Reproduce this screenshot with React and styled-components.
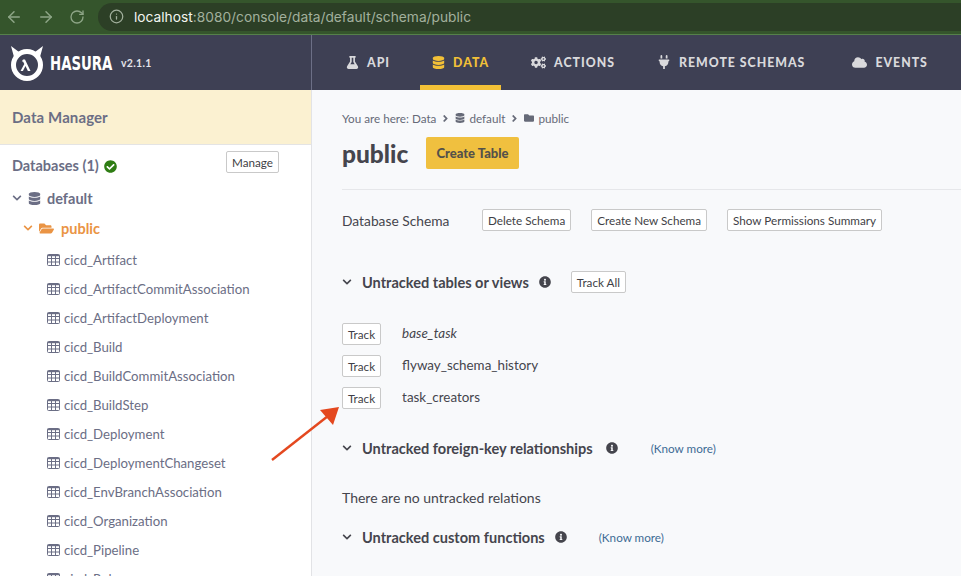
import React from "react";
import styled, { createGlobalStyle } from "styled-components";
import {
  FaFlask,
  FaDatabase,
  FaCogs,
  FaPlug,
  FaCloud,
  FaCheckCircle,
  FaChevronDown,
  FaFolderOpen,
  FaFolder,
  FaInfoCircle,
  FaAngleRight,
} from "react-icons/fa";
import { ArrowLeft, ArrowRight, RotateCw, Info } from "lucide-react";

const GlobalStyle = createGlobalStyle`
  html, body {
    margin: 0;
    padding: 0;
    height: 100%;
    overflow: hidden;
    background: #ffffff;
    font-family: Lato, "Noto Sans", sans-serif;
  }
  * { box-sizing: border-box; }
`;

const Page = styled.div`
  position: relative;
  width: 961px;
  height: 576px;
  display: flex;
  flex-direction: column;
  overflow: hidden;
`;

const ChromeBar = styled.div`
  height: 35px;
  flex: none;
  display: flex;
  align-items: center;
  padding: 0 0 1px 5px;
  background: #35552c;
  border-bottom: 1px solid #55804a;
  color: #8da586;
`;

const NavButton = styled.span`
  display: flex;
  width: 18px;
  margin-right: 14px;
`;

const UrlPill = styled.div`
  flex: 1;
  height: 28px;
  margin-left: -3px;
  display: flex;
  align-items: center;
  gap: 10px;
  padding-left: 11px;
  background: #2c3f26;
  border-radius: 14px 0 0 14px;
  font-family: Inter, sans-serif;
  font-size: 13.75px;
  color: #a2b09d;
`;

const Host = styled.span`
  color: #f2f5f0;
`;

const TopBar = styled.header`
  height: 55px;
  flex: none;
  display: flex;
  background: #3e4054;
`;

const Brand = styled.div`
  width: 312px;
  flex: none;
  display: flex;
  align-items: center;
  padding-left: 10px;
  border-right: 1px solid #6c6f86;
`;

const BrandName = styled.span`
  margin-left: 6px;
  width: 60px;
  font-family: "DejaVu Sans Condensed", "Liberation Sans", sans-serif;
  font-weight: 700;
  font-size: 20px;
  color: #ffffff;
  transform: scaleX(0.74);
  transform-origin: left center;
`;

const Version = styled.span`
  margin-left: 11px;
  font-size: 10.5px;
  font-weight: 700;
  letter-spacing: 0.3px;
  color: #e4e4ea;
`;

const Tabs = styled.nav`
  display: flex;
  padding-left: 22px;
`;

const Tab = styled.div`
  display: flex;
  align-items: center;
  gap: 8px;
  height: 55px;
  padding: 4px 12px 0;
  margin-right: ${(p) => p.$after}px;
  border-bottom: 5px solid ${(p) => (p.$active ? "#f2c037" : "transparent")};
  font-size: 12.3px;
  font-weight: 900;
  letter-spacing: 1px;
  white-space: nowrap;
  color: ${(p) => (p.$active ? "#f2c037" : "#d9d9dc")};
`;

const Body = styled.div`
  flex: 1;
  display: flex;
  min-height: 0;
`;

const Sidebar = styled.aside`
  width: 312px;
  flex: none;
  border-right: 1px solid #e2e3e6;
  background: #ffffff;
  color: #6b6e85;
`;

const SidebarTitle = styled.div`
  height: 55px;
  display: flex;
  align-items: center;
  padding-left: 12px;
  background: #fbf1d1;
  border-bottom: 1px solid #e4e4e4;
  font-size: 15px;
  font-weight: 700;
  letter-spacing: 0.1px;
  color: #6b6e85;
`;

const DbHeader = styled.div`
  display: flex;
  justify-content: space-between;
  align-items: flex-start;
  padding: 6px 32px 0 12px;
  height: 38px;
`;

const DbTitle = styled.div`
  display: flex;
  align-items: center;
  gap: 5px;
  padding-top: 5px;
  font-size: 14.5px;
  font-weight: 700;
  line-height: 20px;
`;

const SmallButton = styled.button`
  height: 22px;
  margin-left: ${(p) => p.$left || 0}px;
  padding: 0 5px;
  border: 1px solid #c9c9c9;
  border-radius: 2px;
  background: #ffffff;
  color: #3f3f46;
  font-family: inherit;
  font-size: 11.7px;
  line-height: 20px;
  white-space: nowrap;
`;

const TreeRow = styled.div`
  display: flex;
  align-items: center;
  height: 30px;
  padding-left: ${(p) => p.$indent}px;
  font-size: 14.5px;
  font-weight: 700;
  color: ${(p) => p.$color || "#6b6e85"};
`;

const TreeChevron = styled.span`
  display: flex;
  width: 16px;
`;

const TreeIcon = styled.span`
  display: flex;
  width: ${(p) => p.$w}px;
`;

const TableList = styled.div`
  margin-top: 2px;
`;

const TableRow = styled.div`
  display: flex;
  align-items: center;
  gap: 4px;
  height: 29px;
  padding-left: 47px;
  font-size: 13.2px;
  color: #6b6e85;
`;

const Main = styled.main`
  flex: 1;
  min-width: 0;
  padding: 19px 0 0 30px;
  background: #f8f9fb;
  color: #45454d;
`;

const Breadcrumb = styled.div`
  display: flex;
  align-items: center;
  gap: 4px;
  height: 18px;
  font-size: 11.7px;
  color: #666a78;
`;

const TitleRow = styled.div`
  display: flex;
  align-items: center;
  gap: 19px;
  height: 32px;
  margin-top: 10px;
`;

const PageTitle = styled.h1`
  margin: 0;
  width: 65px;
  font-size: 24.5px;
  font-weight: 900;
  color: #45454d;
`;

const CreateButton = styled.button`
  width: 93px;
  height: 32px;
  padding: 0;
  border: 0;
  border-radius: 2px;
  background: #f0c03f;
  color: #54514a;
  font-family: inherit;
  font-size: 13px;
  font-weight: 900;
`;

const Divider = styled.hr`
  margin: 20px 0 0;
  border: 0;
  border-top: 1px solid #e6e7ea;
`;

const SchemaRow = styled.div`
  display: flex;
  align-items: center;
  height: 22px;
  margin-top: 19px;
  font-size: 13.8px;
`;

const SchemaLabel = styled.span`
  width: 140px;
`;

const SchemaButtons = styled.div`
  display: flex;
  gap: 20px;
`;

const Section = styled.div`
  display: flex;
  align-items: center;
  height: 24px;
  margin-top: ${(p) => p.$top}px;
  font-size: 14.55px;
  font-weight: 700;
  color: #45454d;
`;

const SectionChevron = styled.span`
  display: flex;
  width: 20px;
`;

const SectionInfo = styled.span`
  display: flex;
  margin-left: ${(p) => p.$left || 10}px;
`;

const KnowMore = styled.span`
  margin-left: ${(p) => p.$left}px;
  font-size: 11.7px;
  font-weight: 400;
  color: #3d6b95;
`;

const UntrackedList = styled.div`
  margin-top: 29px;
`;

const UntrackedRow = styled.div`
  display: flex;
  align-items: center;
  gap: 20px;
  height: 22px;
  margin-bottom: 10px;
  font-size: 13.4px;
`;

const UntrackedName = styled.span`
  margin-top: -3px;
  margin-left: 1px;
  font-style: ${(p) => (p.$italic ? "italic" : "normal")};
`;

const EmptyNote = styled.div`
  margin-top: 29px;
  height: 18px;
  line-height: 18px;
  font-size: 14px;
`;

const ArrowOverlay = styled.svg`
  position: absolute;
  left: 262px;
  top: 398px;
`;

const tables = [
  "cicd_Artifact",
  "cicd_ArtifactCommitAssociation",
  "cicd_ArtifactDeployment",
  "cicd_Build",
  "cicd_BuildCommitAssociation",
  "cicd_BuildStep",
  "cicd_Deployment",
  "cicd_DeploymentChangeset",
  "cicd_EnvBranchAssociation",
  "cicd_Organization",
  "cicd_Pipeline",
  "cicd_Role",
];

const untracked = [
  { name: "base_task", italic: true },
  { name: "flyway_schema_history" },
  { name: "task_creators" },
];

function HasuraLogo() {
  return (
    <svg width="34" height="36" viewBox="0 0 34 36">
      <path d="M1 1 L9 7 L4 12 Z M33 1 L25 7 L30 12 Z" fill="#fff" />
      <circle cx="17" cy="20" r="13.5" fill="none" stroke="#fff" strokeWidth="5" />
      <path
        d="M13 14.5 h2 l5.5 11.5 h-2.6 l-2.4 -5 l-2.6 5 h-2.4 l3.8 -7 l-1.3 -2.6 h-1.2 z"
        fill="#fff"
      />
    </svg>
  );
}

// outlined grid, the filled FaTable header is too heavy here
function TableIcon() {
  return (
    <svg width="13" height="12" viewBox="0 0 13 12" fill="none" stroke="currentColor">
      <rect x="0.5" y="0.5" width="12" height="11" rx="1" />
      <path d="M0.5 1.5 H12.5" strokeWidth="1.4" />
      <path d="M0.5 4.5 H12.5 M0.5 8 H12.5 M4.5 1 V11.5 M8.5 1 V11.5" />
    </svg>
  );
}

function App() {
  return (
    <Page>
      <GlobalStyle />
      <ChromeBar>
        <NavButton><ArrowLeft size={18} /></NavButton>
        <NavButton><ArrowRight size={18} /></NavButton>
        <NavButton><RotateCw size={16} /></NavButton>
        <UrlPill>
          <Info size={15} />
          <span>
            <Host>localhost</Host>:8080/console/data/default/schema/public
          </span>
        </UrlPill>
      </ChromeBar>

      <TopBar>
        <Brand>
          <HasuraLogo />
          <BrandName>HASURA</BrandName>
          <Version>v2.1.1</Version>
        </Brand>
        <Tabs>
          <Tab $after={18}><FaFlask size={13} />API</Tab>
          <Tab $after={18} $active><FaDatabase size={13} />DATA</Tab>
          <Tab $after={18}><FaCogs size={15} />ACTIONS</Tab>
          <Tab $after={23}><FaPlug size={14} />REMOTE SCHEMAS</Tab>
          <Tab $after={0}><FaCloud size={15} />EVENTS</Tab>
        </Tabs>
      </TopBar>

      <Body>
        <Sidebar>
          <SidebarTitle>Data Manager</SidebarTitle>
          <DbHeader>
            <DbTitle>
              Databases (1) <FaCheckCircle size={13} color="#2f7d14" />
            </DbTitle>
            <SmallButton>Manage</SmallButton>
          </DbHeader>
          <TreeRow $indent={12}>
            <TreeChevron><FaChevronDown size={10} /></TreeChevron>
            <TreeIcon $w={19}><FaDatabase size={13} /></TreeIcon>
            default
          </TreeRow>
          <TreeRow $indent={23} $color="#ea9444">
            <TreeChevron><FaChevronDown size={10} /></TreeChevron>
            <TreeIcon $w={22}><FaFolderOpen size={15} /></TreeIcon>
            public
          </TreeRow>
          <TableList>
            {tables.map((t) => (
              <TableRow key={t}>
                <TableIcon />
                {t}
              </TableRow>
            ))}
          </TableList>
        </Sidebar>

        <Main>
          <Breadcrumb>
            You are here: Data <FaAngleRight size={11} />
            <FaDatabase size={10} /> default <FaAngleRight size={11} />
            <FaFolder size={10} /> public
          </Breadcrumb>
          <TitleRow>
            <PageTitle>public</PageTitle>
            <CreateButton>Create Table</CreateButton>
          </TitleRow>
          <Divider />
          <SchemaRow>
            <SchemaLabel>Database Schema</SchemaLabel>
            <SchemaButtons>
              <SmallButton>Delete Schema</SmallButton>
              <SmallButton>Create New Schema</SmallButton>
              <SmallButton>Show Permissions Summary</SmallButton>
            </SchemaButtons>
          </SchemaRow>

          <Section $top={39}>
            <SectionChevron><FaChevronDown size={10} /></SectionChevron>
            Untracked tables or views
            <SectionInfo><FaInfoCircle size={12} /></SectionInfo>
            <SmallButton $left={20}>Track All</SmallButton>
          </Section>
          <UntrackedList>
            {untracked.map((u) => (
              <UntrackedRow key={u.name}>
                <SmallButton>Track</SmallButton>
                <UntrackedName $italic={u.italic}>{u.name}</UntrackedName>
              </UntrackedRow>
            ))}
          </UntrackedList>

          <Section $top={27}>
            <SectionChevron><FaChevronDown size={10} /></SectionChevron>
            Untracked foreign-key relationships
            <SectionInfo $left={13}><FaInfoCircle size={12} /></SectionInfo>
            <KnowMore $left={33}>(Know more)</KnowMore>
          </Section>
          <EmptyNote>There are no untracked relations</EmptyNote>
          <Section $top={18}>
            <SectionChevron><FaChevronDown size={10} /></SectionChevron>
            Untracked custom functions
            <SectionInfo><FaInfoCircle size={12} /></SectionInfo>
            <KnowMore $left={32}>(Know more)</KnowMore>
          </Section>
        </Main>
      </Body>

      <ArrowOverlay width="80" height="70" viewBox="0 0 80 70">
        <line x1="10" y1="62" x2="66" y2="18" stroke="#e4481f" strokeWidth="2.4" />
        <polygon points="77,9 71,27 58,12" fill="#e4481f" />
      </ArrowOverlay>
    </Page>
  );
}

export default App;
